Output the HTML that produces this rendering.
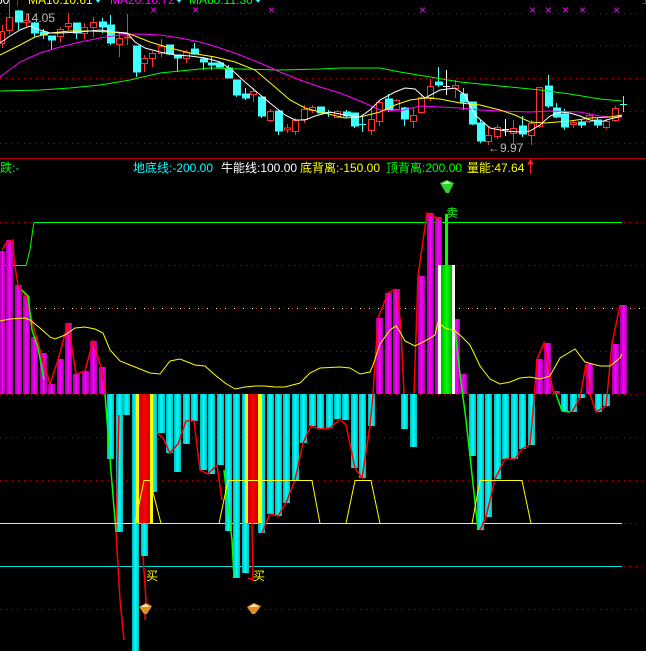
<!DOCTYPE html>
<html><head><meta charset="utf-8"><style>
html,body{margin:0;padding:0;background:#000;width:646px;height:651px;overflow:hidden}
svg{display:block}
text{font-family:"Liberation Sans","Noto Sans CJK SC",sans-serif;font-size:12px}
</style></head><body>
<svg width="646" height="651" viewBox="0 0 646 651" xmlns="http://www.w3.org/2000/svg">
<defs>
<linearGradient id="cy" x1="0" x2="1"><stop offset="0" stop-color="#00b8b8"/><stop offset="0.5" stop-color="#00ffff"/><stop offset="1" stop-color="#00b8b8"/></linearGradient>
<linearGradient id="mg" x1="0" x2="1"><stop offset="0" stop-color="#a000a0"/><stop offset="0.5" stop-color="#ff00ff"/><stop offset="1" stop-color="#a000a0"/></linearGradient>
<linearGradient id="rd" x1="0" x2="1"><stop offset="0" stop-color="#c00000"/><stop offset="0.5" stop-color="#ff0000"/><stop offset="1" stop-color="#c00000"/></linearGradient>
<linearGradient id="gr" x1="0" x2="1"><stop offset="0" stop-color="#00b000"/><stop offset="0.5" stop-color="#00ff00"/><stop offset="1" stop-color="#00b000"/></linearGradient>
</defs>
<rect width="646" height="651" fill="#000"/>
<!-- top panel grid -->
<g stroke="#c00000" stroke-width="1" stroke-dasharray="1,5">
<line x1="0" y1="13.5" x2="646" y2="13.5"/><line x1="0" y1="45.5" x2="646" y2="45.5"/>
<line x1="0" y1="78.5" x2="646" y2="78.5"/><line x1="0" y1="111.5" x2="646" y2="111.5"/>
<line x1="0" y1="143.5" x2="646" y2="143.5"/>
</g>
<line x1="0" y1="158.5" x2="646" y2="158.5" stroke="#c00000"/>
<path d="M642 3.5H645.5V0" stroke="#e00000" fill="none"/>
<!-- top text -->
<text x="-4" y="4" fill="#fff">50</text>
<text x="16" y="4" fill="#ff0000">|</text>
<text x="28" y="4" fill="#ffff00">MA10:10.61</text><text x="93" y="4" fill="#40ffff" font-size="10">✦</text>
<text x="110" y="4" fill="#ff00ff">MA20:10.72</text><text x="174" y="4" fill="#40ffff" font-size="10">✦</text>
<text x="189" y="4" fill="#00ff00">MA60:11.30</text><text x="253" y="4" fill="#40ffff" font-size="10">✦</text>
<g fill="#ff00ff" font-size="9"><text x="150" y="14">×</text><text x="192" y="14">×</text><text x="268" y="14">×</text><text x="419" y="14">×</text><text x="529" y="14">×</text><text x="545" y="14">×</text><text x="562" y="14">×</text><text x="579" y="14">×</text><text x="613" y="14">×</text></g>
<path d="M18 11V16M21 11V16" stroke="#999"/>
<text x="25" y="22" fill="#bbb" font-size="13">14.05</text>
<text x="488" y="152" fill="#bbb" font-size="12">←9.97</text>
<!-- candles -->
<g stroke-width="1">
<g stroke="#ff3030" fill="#000">
<line x1="2.5" y1="25" x2="2.5" y2="48"/><rect x="0.5" y="31.5" width="4" height="12"/>
<line x1="9.5" y1="0" x2="9.5" y2="34"/><rect x="6.5" y="17.5" width="6" height="13"/>
<line x1="26.5" y1="13" x2="26.5" y2="27"/><rect x="23.5" y="20.5" width="6" height="2"/>
<line x1="60.5" y1="27" x2="60.5" y2="42"/><rect x="57.5" y="29.5" width="6" height="7"/>
<line x1="68.5" y1="13" x2="68.5" y2="30"/><rect x="65.5" y="23.5" width="6" height="3"/>
<line x1="84.5" y1="23" x2="84.5" y2="39"/><rect x="81.5" y="27.5" width="6" height="6"/>
<line x1="93.5" y1="17" x2="93.5" y2="37"/><rect x="90.5" y="22.5" width="6" height="5"/>
<line x1="119.5" y1="33" x2="119.5" y2="57"/><rect x="116.5" y="38.5" width="6" height="6"/>
<line x1="127.5" y1="14" x2="127.5" y2="45"/><rect x="124.5" y="37" width="6" height="1"/>
<line x1="144.5" y1="55" x2="144.5" y2="72"/><rect x="141.5" y="58.5" width="6" height="5"/>
<line x1="152.5" y1="51" x2="152.5" y2="67"/><rect x="149.5" y="53.5" width="6" height="5"/>
<line x1="161.5" y1="39" x2="161.5" y2="57"/><rect x="158.5" y="46.5" width="6" height="7"/>
<line x1="186.5" y1="50" x2="186.5" y2="63"/><rect x="183.5" y="52.5" width="6" height="6"/>
<line x1="253.5" y1="88" x2="253.5" y2="102"/><rect x="250.5" y="91.5" width="6" height="3"/>
<line x1="270.5" y1="109" x2="270.5" y2="122"/><rect x="267.5" y="111.5" width="6" height="9"/>
<line x1="287.5" y1="124" x2="287.5" y2="133"/><rect x="284.5" y="128" width="6" height="2"/>
<line x1="295.5" y1="118" x2="295.5" y2="135"/><rect x="292.5" y="120.5" width="6" height="11"/>
<line x1="304.5" y1="105" x2="304.5" y2="123"/><rect x="301.5" y="109.5" width="6" height="10"/>
<line x1="312.5" y1="105" x2="312.5" y2="113"/><rect x="309.5" y="107.5" width="6" height="3"/>
<line x1="337.5" y1="110" x2="337.5" y2="118"/><rect x="334.5" y="111.5" width="6" height="6"/>
<line x1="371.5" y1="107" x2="371.5" y2="135"/><rect x="368.5" y="119.5" width="6" height="11"/>
<line x1="379.5" y1="100" x2="379.5" y2="126"/><rect x="376.5" y="102.5" width="6" height="19"/>
<line x1="396.5" y1="99" x2="396.5" y2="110"/><rect x="393.5" y="100.5" width="6" height="9"/>
<line x1="413.5" y1="108" x2="413.5" y2="128"/><rect x="410.5" y="115.5" width="6" height="6"/>
<line x1="421.5" y1="94" x2="421.5" y2="113"/><rect x="418.5" y="97.5" width="6" height="15"/>
<line x1="430.5" y1="79" x2="430.5" y2="101"/><rect x="427.5" y="86.5" width="6" height="11"/>
<line x1="455.5" y1="80" x2="455.5" y2="98"/><rect x="452.5" y="85.5" width="6" height="3"/>
<line x1="488.5" y1="127" x2="488.5" y2="145"/><rect x="485.5" y="135.5" width="6" height="6"/>
<line x1="497.5" y1="125" x2="497.5" y2="139"/><rect x="494.5" y="127.5" width="6" height="9"/>
<line x1="513.5" y1="120" x2="513.5" y2="145"/><rect x="510.5" y="128.5" width="6" height="5"/>
<line x1="531.5" y1="120" x2="531.5" y2="145"/><rect x="528.5" y="123.5" width="6" height="12"/>
<line x1="539.5" y1="87" x2="539.5" y2="128"/><rect x="536.5" y="87.5" width="6" height="39"/>
<line x1="573.5" y1="121" x2="573.5" y2="128"/><rect x="570.5" y="122.5" width="6" height="2"/>
<line x1="589.5" y1="113" x2="589.5" y2="123"/><rect x="586.5" y="115.5" width="6" height="6"/>
<line x1="606.5" y1="119" x2="606.5" y2="129"/><rect x="603.5" y="121.5" width="6" height="6"/>
<line x1="615.5" y1="106" x2="615.5" y2="122"/><rect x="612.5" y="108.5" width="6" height="12"/>
</g>
<g stroke="#40ffff" fill="#40ffff">
<line x1="18.5" y1="10" x2="18.5" y2="30"/><rect x="15.5" y="11" width="7" height="11"/>
<line x1="34.5" y1="22" x2="34.5" y2="37"/><rect x="31.5" y="23" width="7" height="10"/>
<line x1="43.5" y1="29" x2="43.5" y2="39"/><rect x="40.5" y="32" width="7" height="3"/>
<line x1="51.5" y1="36" x2="51.5" y2="50"/><rect x="48.5" y="36" width="7" height="4"/>
<line x1="76.5" y1="23" x2="76.5" y2="39"/><rect x="73.5" y="23" width="7" height="10"/>
<line x1="102.5" y1="18" x2="102.5" y2="33"/><rect x="99.5" y="22" width="7" height="5"/>
<line x1="110.5" y1="15" x2="110.5" y2="45"/><rect x="107.5" y="25" width="7" height="18"/>
<line x1="136.5" y1="46" x2="136.5" y2="77"/><rect x="133.5" y="46" width="7" height="26"/>
<line x1="169.5" y1="45" x2="169.5" y2="55"/><rect x="166.5" y="45" width="7" height="9"/>
<line x1="177.5" y1="55" x2="177.5" y2="72"/><rect x="174.5" y="55" width="7" height="3"/>
<line x1="194.5" y1="43" x2="194.5" y2="55"/><rect x="191.5" y="49" width="7" height="5"/>
<line x1="203.5" y1="57" x2="203.5" y2="70"/><rect x="200.5" y="59" width="7" height="3"/>
<line x1="211.5" y1="57" x2="211.5" y2="70"/><rect x="208.5" y="63" width="7" height="2"/>
<line x1="219.5" y1="62" x2="219.5" y2="68"/><rect x="216.5" y="63" width="7" height="4"/>
<line x1="228.5" y1="65" x2="228.5" y2="78"/><rect x="225.5" y="68" width="7" height="10"/>
<line x1="236.5" y1="80" x2="236.5" y2="97"/><rect x="233.5" y="80" width="7" height="15"/>
<line x1="245.5" y1="88" x2="245.5" y2="100"/><rect x="242.5" y="94" width="7" height="4"/>
<line x1="261.5" y1="97" x2="261.5" y2="118"/><rect x="258.5" y="97" width="7" height="19"/>
<line x1="278.5" y1="111" x2="278.5" y2="135"/><rect x="275.5" y="111" width="7" height="20"/>
<line x1="320.5" y1="107" x2="320.5" y2="113"/><rect x="317.5" y="107" width="7" height="6"/>
<line x1="328.5" y1="110" x2="328.5" y2="117"/><line x1="325" y1="112.5" x2="332" y2="112.5"/>
<line x1="346.5" y1="110" x2="346.5" y2="118"/><rect x="343.5" y="112" width="7" height="4"/>
<line x1="354.5" y1="113" x2="354.5" y2="128"/><rect x="351.5" y="113" width="7" height="13"/>
<line x1="362.5" y1="117" x2="362.5" y2="132"/><line x1="359" y1="124.5" x2="366" y2="124.5"/>
<line x1="388.5" y1="94" x2="388.5" y2="112"/><rect x="385.5" y="99" width="7" height="11"/>
<line x1="404.5" y1="107" x2="404.5" y2="126"/><rect x="401.5" y="108" width="7" height="11"/>
<line x1="438.5" y1="67" x2="438.5" y2="87"/><rect x="435.5" y="82" width="7" height="3"/>
<line x1="463.5" y1="88" x2="463.5" y2="110"/><rect x="460.5" y="94" width="7" height="8"/>
<line x1="472.5" y1="102" x2="472.5" y2="125"/><rect x="469.5" y="102" width="7" height="22"/>
<line x1="480.5" y1="120" x2="480.5" y2="143"/><rect x="477.5" y="123" width="7" height="18"/>
<line x1="522.5" y1="116" x2="522.5" y2="137"/><rect x="519.5" y="126" width="7" height="8"/>
<line x1="548.5" y1="75" x2="548.5" y2="108"/><rect x="545.5" y="86" width="7" height="20"/>
<line x1="556.5" y1="103" x2="556.5" y2="118"/><rect x="553.5" y="108" width="7" height="9"/>
<line x1="564.5" y1="109" x2="564.5" y2="130"/><rect x="561.5" y="114" width="7" height="13"/>
<line x1="581.5" y1="120" x2="581.5" y2="128"/><rect x="578.5" y="122" width="7" height="3"/>
<line x1="597.5" y1="118" x2="597.5" y2="128"/><rect x="594.5" y="120" width="7" height="5"/>
<line x1="623.5" y1="96" x2="623.5" y2="112"/><line x1="620" y1="104.5" x2="627" y2="104.5"/>
</g>
<g stroke="#fff"><line x1="446.5" y1="70" x2="446.5" y2="95"/><line x1="443" y1="86.5" x2="450" y2="86.5"/>
<line x1="505.5" y1="119" x2="505.5" y2="136"/><line x1="502" y1="129.5" x2="509" y2="129.5"/></g>
</g>
<!-- MA lines -->
<g fill="none" stroke-width="1">
<polyline stroke="#00ff00" points="0,91 40,90 70,88 100,85 130,80 160,73 190,70 210,68 240,69 280,70 320,69 340,68 380,68 400,72 430,77 460,82 500,86 540,90 570,94 600,99 622,101"/>
<polyline stroke="#ff00ff" points="0,77 20,62 40,53 60,47 80,42 100,38 120,35 140,34 160,35 180,38 200,42 220,48 240,55 260,63 280,72 300,80 320,87 340,93 360,101 380,110 400,111 420,106 440,107 460,108 480,110 500,111 530,112 550,111 580,112 600,116 622,118"/>
<polyline stroke="#ffff00" points="0,55 20,45 35,37 50,33 70,31 90,31 110,32 130,34 150,42 170,48 190,53 215,57 235,62 255,70 275,87 290,100 305,108 320,112 345,118 360,117 380,112 395,105 410,100 425,98 440,99 460,103 480,105 500,110 515,115 530,122 545,123 570,121 590,118 610,117 622,115"/>
<polyline stroke="#ffffff" points="0,43 10,36 20,30 30,26 40,30 50,33 60,33 80,32 100,30 115,32 127,33 135,42 145,48 160,52 175,55 190,56 205,58 220,62 232,70 245,82 258,93 270,103 285,115 295,120 305,120 315,116 330,112 345,115 360,117 370,110 380,100 395,92 405,88 415,89 425,98 440,90 455,88 465,95 475,115 490,128 505,131 520,132 530,131 540,125 550,116 560,112 570,113 580,116 590,120 600,122 610,119 622,116"/>
</g>
<!-- legend -->
<text x="0" y="172" fill="#00ff00">跌:-</text>
<text x="133" y="172" fill="#00ffff">地底线:-200.00</text>
<text x="221" y="172" fill="#ffffff">牛能线:100.00</text>
<text x="300" y="172" fill="#ffff00">底背离:-150.00</text>
<text x="386" y="172" fill="#00ff00">顶背离:200.00</text>
<text x="467" y="172" fill="#ffff00">量能:47.64</text>
<path d="M530.5 174V162M528 164L530.5 160L533 164Z" stroke="#ff2020" fill="#ff2020"/>
<!-- lower grid -->
<g stroke="#c00000" stroke-dasharray="1,5">
<line x1="0" y1="222.5" x2="646" y2="222.5"/><line x1="0" y1="265.5" x2="646" y2="265.5"/>
<line x1="0" y1="351.5" x2="646" y2="351.5"/><line x1="0" y1="394.5" x2="646" y2="394.5"/>
<line x1="0" y1="437.5" x2="646" y2="437.5"/><line x1="0" y1="480.5" x2="646" y2="480.5"/>
<line x1="0" y1="523.5" x2="646" y2="523.5"/><line x1="0" y1="566.5" x2="646" y2="566.5"/>
<line x1="0" y1="609.5" x2="646" y2="609.5"/>
</g>
<line x1="0" y1="308.5" x2="646" y2="308.5" stroke="#fff" stroke-dasharray="1,8"/>
<line x1="4" y1="308.5" x2="646" y2="308.5" stroke="#c00000" stroke-dasharray="1,8"/>
<line x1="0" y1="523.5" x2="622" y2="523.5" stroke="#ffff00"/>
<line x1="0" y1="566.5" x2="622" y2="566.5" stroke="#00e0e0"/>
<polyline fill="none" stroke="#00ff00" points="1,259 1,265.5 26,265.5 30,250 33,228 34,222.5 622,222.5"/>
<!-- magenta bars -->
<g fill="url(#mg)">
<rect x="0" y="251" width="5" height="143"/><rect x="6" y="240" width="7" height="154"/><rect x="15" y="285" width="7" height="109"/>
<rect x="23" y="296" width="7" height="98"/><rect x="31" y="337" width="7" height="57"/><rect x="40" y="353" width="7" height="41"/>
<rect x="48" y="384" width="7" height="10"/><rect x="57" y="359" width="7" height="35"/><rect x="65" y="323" width="7" height="71"/>
<rect x="73" y="374" width="7" height="20"/><rect x="82" y="371" width="7" height="23"/><rect x="90" y="341" width="7" height="53"/>
<rect x="99" y="367" width="7" height="27"/>
<rect x="376" y="318" width="7" height="76"/><rect x="385" y="293" width="7" height="101"/><rect x="393" y="289" width="7" height="105"/>
<rect x="418" y="276" width="7" height="118"/><rect x="427" y="213" width="7" height="181"/><rect x="435" y="217" width="7" height="177"/>
<rect x="453" y="319" width="7" height="75"/><rect x="460" y="374" width="7" height="20"/>
<rect x="536" y="359" width="7" height="35"/><rect x="544" y="343" width="7" height="51"/><rect x="553" y="391" width="7" height="3"/>
<rect x="586" y="364" width="7" height="30"/><rect x="612" y="344" width="7" height="50"/><rect x="620" y="305" width="7" height="89"/>
</g>
<!-- cyan bars -->
<g fill="url(#cy)">
<rect x="107" y="394" width="7" height="65"/><rect x="116" y="394" width="7" height="138"/><rect x="123" y="394" width="7" height="21"/>
<rect x="132" y="394" width="7" height="257"/><rect x="141" y="394" width="7" height="162"/><rect x="150" y="394" width="7" height="98"/>
<rect x="158" y="394" width="7" height="39"/><rect x="166" y="394" width="7" height="59"/><rect x="174" y="394" width="7" height="78"/>
<rect x="183" y="394" width="7" height="50"/><rect x="191" y="394" width="7" height="27"/><rect x="200" y="394" width="7" height="76"/>
<rect x="208" y="394" width="7" height="80"/><rect x="217" y="394" width="7" height="71"/><rect x="225" y="394" width="7" height="137"/>
<rect x="233" y="394" width="7" height="184"/><rect x="242" y="394" width="7" height="179"/><rect x="258" y="394" width="7" height="139"/>
<rect x="267" y="394" width="7" height="120"/><rect x="275" y="394" width="7" height="122"/><rect x="283" y="394" width="7" height="109"/>
<rect x="292" y="394" width="7" height="86"/><rect x="300" y="394" width="7" height="49"/><rect x="309" y="394" width="7" height="32"/>
<rect x="317" y="394" width="7" height="35"/><rect x="326" y="394" width="7" height="34"/><rect x="334" y="394" width="7" height="25"/>
<rect x="342" y="394" width="7" height="26"/><rect x="351" y="394" width="7" height="74"/><rect x="359" y="394" width="7" height="84"/>
<rect x="368" y="394" width="7" height="32"/><rect x="401" y="394" width="7" height="35"/><rect x="410" y="394" width="7" height="53"/>
<rect x="469" y="394" width="7" height="62"/><rect x="477" y="394" width="7" height="136"/><rect x="485" y="394" width="7" height="123"/>
<rect x="494" y="394" width="7" height="85"/><rect x="502" y="394" width="7" height="65"/><rect x="511" y="394" width="7" height="65"/>
<rect x="519" y="394" width="7" height="55"/><rect x="528" y="394" width="7" height="51"/>
<rect x="561" y="394" width="7" height="17"/><rect x="570" y="394" width="7" height="18"/><rect x="578" y="394" width="7" height="4"/>
<rect x="595" y="394" width="7" height="18"/><rect x="603" y="394" width="7" height="12"/>
</g>
<!-- red/yellow blocks -->
<rect x="136" y="394" width="17" height="129" fill="#ffff00"/><rect x="139" y="394" width="11" height="129" fill="url(#rd)"/>
<rect x="245" y="394" width="17" height="129" fill="#ffff00"/><rect x="248" y="394" width="10" height="129" fill="url(#rd)"/>
<!-- white/green block -->
<rect x="438" y="265" width="17" height="129" fill="#fff"/><rect x="441" y="265" width="11" height="129" fill="url(#gr)"/>
<rect x="445" y="214" width="3" height="51" fill="#00ff00"/>
<!-- trace lines -->
<g fill="none" stroke="#ff0000" stroke-width="1.5">
<polyline points="2,250 6,243 13,240 14,260 18,285 26,296 33,325 40,350 50,384 58,360 68,323 76,374 85,371 93,341 101,367 106,394"/>
<polyline points="119,415 116,532 120,600 124,640"/>
<polyline points="143,556 146,600 145,620"/>
<polyline points="157,433 163,438 170,453 178,444 186,421 194,421 200,470 208,474 217,465 222,500"/>
<polyline points="252,523 253,580 248,578"/>
<polyline points="262,533 270,514 278,516 286,503 295,480 303,443 311,426 320,429 330,428 340,419 346,425 355,468 362,478 370,426 373,394 378,318 388,293 396,289"/>
<polyline points="397,289 401,330 404,394"/>
<polyline points="414,394 418,276 427,213 435,217 442,220"/>
<polyline points="480,530 486,517 495,479 505,459 515,459 522,449 530,445 534,400 537,359 544,343 553,391 558,394"/>
<polyline points="572,412 580,398 586,364 590,394 596,412 606,406 612,344 620,305"/>
</g>
<g fill="none" stroke="#00ff00" stroke-width="1.5">
<polyline points="22,290 28,296 32,330 38,348 44,380"/>
<polyline points="105,394 110,459 116,532"/>
<polyline points="224,470 232,540 234,578"/>
<polyline points="455,330 460,374 466,420 470,456 478,530"/>
<polyline points="556,394 562,411 570,412"/>
</g>
<!-- yellow trapezoid line & curve -->
<polyline fill="none" stroke="#ffff00" points="0,523.5 135,523.5 144,480.5 150,480.5 161,523.5 219,523.5 228,480.5 312,480.5 320,523.5 346,523.5 355,480.5 371,480.5 380,523.5 472,523.5 480,480.5 522,480.5 531,523.5 622,523.5"/>
<polyline fill="none" stroke="#ffff00" points="0,321 10,319 25,318 30,320 40,328 50,337 55,339 65,335 75,328 85,327 95,329 103,333 110,350 120,361 135,367 150,373 160,374 170,361 180,359 195,365 205,366 215,375 225,383 235,389 245,387 255,386 265,386 275,387 285,387 300,383 310,373 320,368 340,367 350,368 360,374 370,372 373,365 380,344 390,330 396,326 400,332 405,341 415,346 425,341 435,335 438,322 445,328 455,331 462,337 470,345 480,366 490,379 500,384 510,382 520,378 530,377 540,379 550,376 560,358 570,352 575,349 585,362 600,366 610,366 620,358 622,354"/>
<!-- signals -->
<path d="M440 183 L447 180 L454 183 L449 193 L446 193 Z" fill="#30d030"/><path d="M442 184 L447 181 L451 184 Z" fill="#c0ffc0"/>
<text x="446" y="217" fill="#00ff00" font-size="13">卖</text>
<text x="146" y="580" fill="#ffff00" font-size="13">买</text>
<text x="253" y="580" fill="#ffff00" font-size="13">买</text>
<path d="M139 607 L146 603 L152 606 L147 614 L144 614 Z" fill="#e09020"/><path d="M140 607 L146 604 L150 607 Z" fill="#ffe0a0"/>
<path d="M247 607 L254 603 L261 606 L255 614 L252 614 Z" fill="#e09020"/><path d="M248 607 L254 604 L259 607 Z" fill="#ffe0a0"/>
</svg>
</body></html>
